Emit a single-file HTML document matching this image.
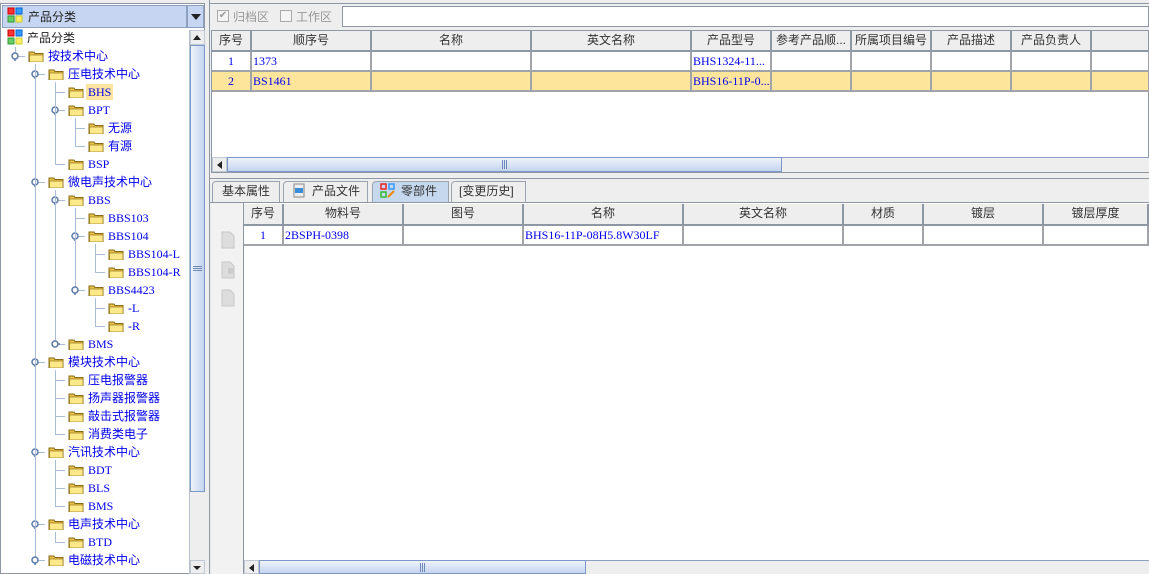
<!DOCTYPE html>
<html><head><meta charset="utf-8">
<style>
*{margin:0;padding:0;box-sizing:border-box}
body{width:1149px;height:574px;overflow:hidden;background:#eeeeee;font-family:"Liberation Sans","Noto Sans CJK SC",sans-serif;font-size:12px;color:#333;position:relative}
.a{position:absolute}
.serif{font-family:"Liberation Serif","Noto Sans CJK SC",serif}
.fold{position:absolute;width:17px;height:12px}
.t{position:absolute;color:#0000ee;white-space:nowrap;line-height:16px;font-size:12px}
.hl{position:absolute;background:#a9bcd8}
.th{position:absolute;background:#eeeeee;border-right:2px solid #8e98a4;border-bottom:2px solid #8e98a4;text-align:center;line-height:19px;color:#333;font-size:12px;white-space:nowrap;overflow:hidden}
.td{position:absolute;border-right:2px solid #a0a4a8;border-bottom:2px solid #a0a4a8;line-height:18px;color:#0000ee;white-space:nowrap;overflow:hidden;font-family:"Liberation Serif","Noto Sans CJK SC",serif;font-size:12px}
.sb{background:linear-gradient(#eef3fb,#c4d4ee);border:1px solid #7d98c8}
.sbv{background:linear-gradient(90deg,#eef3fb,#c4d4ee);border:1px solid #7d98c8}
</style></head><body>
<!-- left panel -->
<div class="a" style="left:0;top:3px;width:205px;height:571px;border:1px solid #8e98a4;background:#fff"></div>
<div class="a" style="left:2px;top:5px;width:185px;height:23px;background:#c6d6f2;border:1px solid #8ea0c0"></div>
<div class="a" style="left:187px;top:5px;width:17px;height:23px;background:#c6d6f2;border:1px solid #8ea0c0"></div>
<div class="a" style="left:191px;top:14px;width:0;height:0;border-left:5px solid transparent;border-right:5px solid transparent;border-top:6px solid #222"></div>
<svg class="a" style="left:7px;top:7px" width="18" height="18"><rect x="1" y="1" width="6" height="6" fill="#f33" stroke="#c00"/><rect x="9" y="1" width="6" height="6" fill="#39f" stroke="#06c"/><rect x="1" y="9" width="6" height="6" fill="#6c6" stroke="#393"/><rect x="9" y="9" width="6" height="6" fill="#fe6" stroke="#cc3"/></svg>
<div class="a" style="left:28px;top:8px;font-size:12px;color:#222">产品分类</div>
<!-- tree scrollbar -->
<div class="a" style="left:189px;top:30px;width:16px;height:544px;background:#eeeeee;border-left:1px solid #b8c0cc"></div>
<div class="a" style="left:190px;top:30px;width:15px;height:15px;background:#eeeeee;border:1px solid #c0c8d4"></div>
<div class="a" style="left:193px;top:35px;border-left:4px solid transparent;border-right:4px solid transparent;border-bottom:5px solid #222"></div>
<div class="a sbv" style="left:190px;top:45px;width:15px;height:447px"></div>
<div class="a" style="left:193px;top:266px;width:9px;height:1px;background:#6e88b8;box-shadow:0 2px #6e88b8,0 4px #6e88b8"></div>
<div class="a" style="left:190px;top:560px;width:15px;height:14px;background:#eeeeee;border:1px solid #c0c8d4"></div>
<div class="a" style="left:193px;top:566px;border-left:4px solid transparent;border-right:4px solid transparent;border-top:4px solid #222"></div>
<div id="tree"></div>
<!-- divider -->
<div class="a" style="left:205px;top:0;width:5px;height:574px;background:#eeeeee;border-right:1px solid #8e98a4"></div>
<!-- right top toolbar -->
<div class="a" style="left:210px;top:3px;width:939px;height:26px;border-top:1px solid #8e98a4;background:#eeeeee"></div>
<div class="a" style="left:217px;top:10px;width:12px;height:12px;border:1px solid #aaa;background:#f4f4f4;color:#999;font-size:10px;line-height:10px;text-align:center">✔</div>
<div class="a" style="left:233px;top:8px;color:#999">归档区</div>
<div class="a" style="left:280px;top:10px;width:12px;height:12px;border:1px solid #aaa;background:#f4f4f4"></div>
<div class="a" style="left:296px;top:8px;color:#999">工作区</div>
<div class="a" style="left:342px;top:6px;width:807px;height:21px;background:#fff;border:1px solid #8e98a4"></div>
<!-- upper table -->
<div class="a" style="left:211px;top:30px;width:938px;height:143px;background:#fff;border:1px solid #8e98a4"></div>
<div id="t1"></div>
<div class="a" style="left:212px;top:157px;width:937px;height:15px;background:#eeeeee;border-top:1px solid #8ea0c0"></div>
<div class="a" style="left:212px;top:157px;width:15px;height:15px;background:#eee;border:1px solid #c0c8d4"></div>
<div class="a" style="left:217px;top:161px;border-top:4px solid transparent;border-bottom:4px solid transparent;border-right:5px solid #222"></div>
<div class="a sb" style="left:227px;top:157px;width:555px;height:15px"></div>
<div class="a" style="left:502px;top:160px;width:1px;height:9px;background:#6e88b8;box-shadow:2px 0 #6e88b8,4px 0 #6e88b8"></div>
<!-- tabs -->
<div class="a" style="left:210px;top:178px;width:939px;height:1px;background:#8e98a4"></div>
<div class="a" style="left:212px;top:181px;width:68px;height:21px;border:1px solid #9aa4b0;border-bottom:none;border-top-left-radius:4px;background:#eeeeee;line-height:19px;padding-left:9px">基本属性</div>
<div class="a" style="left:283px;top:181px;width:85px;height:21px;border:1px solid #9aa4b0;border-bottom:none;border-top-left-radius:4px;background:#eeeeee;line-height:19px;padding-left:28px">产品文件</div>
<svg class="a" style="left:292px;top:183px" width="14" height="16"><rect x="2" y="1" width="10" height="13" fill="#eee" stroke="#888"/><rect x="3" y="5" width="8" height="5" fill="#3a8ed8"/></svg>
<div class="a" style="left:372px;top:181px;width:77px;height:22px;border:1px solid #9aa4b0;border-bottom:none;border-top-left-radius:4px;background:#c6d8ee;line-height:19px;padding-left:28px">零部件</div>
<svg class="a" style="left:380px;top:183px" width="16" height="16"><rect x="1" y="1" width="5" height="5" fill="none" stroke="#e22" stroke-width="1.5"/><rect x="9" y="1" width="5" height="5" fill="none" stroke="#39f" stroke-width="1.5"/><rect x="1" y="9" width="5" height="5" fill="none" stroke="#3b3" stroke-width="1.5"/><path d="M8 14 L14 8" stroke="#e80" stroke-width="2"/></svg>
<div class="a" style="left:451px;top:181px;width:75px;height:21px;border:1px solid #9aa4b0;border-bottom:none;border-top-left-radius:4px;background:#eeeeee;line-height:19px;padding-left:7px">[变更历史]</div>
<div class="a" style="left:210px;top:202px;width:939px;height:1px;background:#8e98a4"></div>
<!-- lower -->
<div class="a" style="left:212px;top:203px;width:32px;height:371px;background:#f2f2f2;border-right:1px solid #8e98a4"></div>
<svg class="a" style="left:218px;top:230px" width="20" height="80"><path d="M4 2h8l4 4v12H4z" fill="#ddd" stroke="#c8c8c8"/><path d="M4 32h8l4 4v12H4z" fill="#ddd" stroke="#c8c8c8"/><path d="M10 38h6v6h-6z" fill="#ccc"/><path d="M4 60h8l4 4v12H4z" fill="#ddd" stroke="#c8c8c8"/></svg>
<div class="a" style="left:244px;top:203px;width:905px;height:357px;background:#fff"></div>
<div id="t2"></div>
<div class="a" style="left:244px;top:560px;width:905px;height:14px;background:#eeeeee;border-top:1px solid #8ea0c0"></div>
<div class="a" style="left:244px;top:560px;width:15px;height:14px;background:#eee;border:1px solid #c0c8d4"></div>
<div class="a" style="left:249px;top:564px;border-top:4px solid transparent;border-bottom:4px solid transparent;border-right:5px solid #222"></div>
<div class="a sb" style="left:259px;top:560px;width:327px;height:14px"></div>
<div class="a" style="left:420px;top:563px;width:1px;height:9px;background:#6e88b8;box-shadow:2px 0 #6e88b8,4px 0 #6e88b8"></div>
<script>
(function(){
var rows=[[0,"产品分类",2],[1,"按技术中心",1],[2,"压电技术中心",1],[3,"BHS",0],[3,"BPT",1],[4,"无源",0],[4,"有源",0],[3,"BSP",0],[2,"微电声技术中心",1],[3,"BBS",1],[4,"BBS103",0],[4,"BBS104",1],[5,"BBS104-L",0],[5,"BBS104-R",0],[4,"BBS4423",1],[5,"-L",0],[5,"-R",0],[3,"BMS",3],[2,"模块技术中心",1],[3,"压电报警器",0],[3,"扬声器报警器",0],[3,"敲击式报警器",0],[3,"消费类电子",0],[2,"汽讯技术中心",1],[3,"BDT",0],[3,"BLS",0],[3,"BMS",0],[2,"电声技术中心",1],[3,"BTD",0],[2,"电磁技术中心",1]];
var h="";
for(var i=0;i<rows.length;i++){var r=rows[i],l=r[0],cy=38+i*18,ty=cy-8;
 if(l==0){h+='<svg class="a" style="left:7px;top:'+(cy-9)+'px" width="18" height="18"><rect x="1" y="1" width="6" height="6" fill="#f33" stroke="#c00"/><rect x="9" y="1" width="6" height="6" fill="#39f" stroke="#06c"/><rect x="1" y="9" width="6" height="6" fill="#6c6" stroke="#393"/><rect x="9" y="9" width="6" height="6" fill="#fe6" stroke="#cc3"/></svg><div class="a" style="left:27px;top:'+ty+'px;line-height:16px;color:#222">产品分类</div>';continue;}
 var fx=28+(l-1)*20,tx=fx+19,lx=fx-13;
 h+='<div class="hl" style="left:'+lx+'px;top:'+cy+'px;width:10px;height:1px"></div>';
 var p=i-1;while(rows[p][0]>=l)p--;
 var py=38+p*18+(l==1?9:8);
 h+='<div class="hl" style="left:'+lx+'px;top:'+py+'px;width:1px;height:'+(cy-py)+'px"></div>';
 if(r[2]==1||r[2]==3){h+='<svg class="a" style="left:'+(lx-4)+'px;top:'+(cy-4)+'px" width="9" height="9"><circle cx="4" cy="4" r="3" fill="#fff" stroke="#5a78a8" stroke-width="1.5"/>'+(r[2]==1?'<line x1="4" y1="7" x2="4" y2="9" stroke="#5a78a8" stroke-width="1.5"/>':'<line x1="7" y1="4" x2="9" y2="4" stroke="#5a78a8" stroke-width="1.5"/>')+'</svg>';}
 h+='<svg class="fold" style="left:'+fx+'px;top:'+(cy-6)+'px" width="17" height="13"><path d="M1 2h5l1 1.5h8v8.5H1z" fill="#e8c24a" stroke="#8a6a10"/><path d="M1.5 5h13.5v7H1.5z" fill="#fde98a" stroke="#9a7a20" stroke-width=".8"/></svg>';
 var lat=/^[A-Z\-]/.test(r[1]);
 var bg=(i==3)?'background:#fde4a0;':'';
 h+='<div class="t'+(lat?' serif':'')+'" style="left:'+(tx-1)+'px;top:'+ty+'px;padding:0 2px;'+bg+'">'+r[1]+'</div>';
}
document.getElementById('tree').innerHTML=h;
function table(id,x0,y0,cols,heads,data,hh,rh,selRow){var s="",x=x0;
 for(var c=0;c<cols.length;c++){s+='<div class="th" style="left:'+x+'px;top:'+y0+'px;width:'+cols[c]+'px;height:'+hh+'px">'+heads[c]+'</div>';
  for(var k=0;k<data.length;k++){var v=data[k][c]||"";var bg=k==selRow?'background:#fee59c;':'background:#fff;';
   s+='<div class="td" style="left:'+x+'px;top:'+(y0+hh+k*rh)+'px;width:'+cols[c]+'px;height:'+rh+'px;'+bg+(c==0?'text-align:center;':'padding-left:1px;')+'">'+v+'</div>';}
  x+=cols[c];}
 document.getElementById(id).innerHTML=s;}
table('t1',212,31,[40,120,160,160,80,80,80,80,80,58],["序号","顺序号","名称","英文名称","产品型号","参考产品顺...","所属项目编号","产品描述","产品负责人",""],[["1","1373","","","BHS1324-11..."],["2","BS1461","","","BHS16-11P-0..."]],21,20,1);
table('t2',244,204,[40,120,120,160,160,80,120,105],["序号","物料号","图号","名称","英文名称","材质","镀层","镀层厚度"],[["1","2BSPH-0398","","BHS16-11P-08H5.8W30LF"]],22,20,-1);
})();
</script>
</body></html>
